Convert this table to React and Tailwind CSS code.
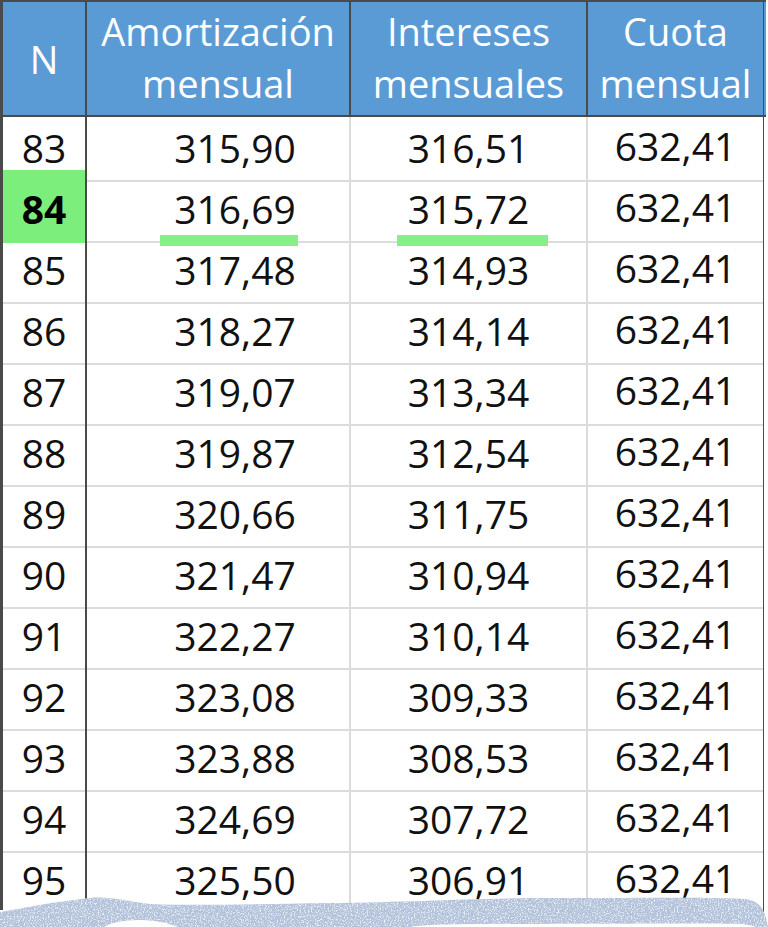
const ROWS = [
  ['83', '315,90', '316,51', '632,41'],
  ['84', '316,69', '315,72', '632,41'],
  ['85', '317,48', '314,93', '632,41'],
  ['86', '318,27', '314,14', '632,41'],
  ['87', '319,07', '313,34', '632,41'],
  ['88', '319,87', '312,54', '632,41'],
  ['89', '320,66', '311,75', '632,41'],
  ['90', '321,47', '310,94', '632,41'],
  ['91', '322,27', '310,14', '632,41'],
  ['92', '323,08', '309,33', '632,41'],
  ['93', '323,88', '308,53', '632,41'],
  ['94', '324,69', '307,72', '632,41'],
  ['95', '325,50', '306,91', '632,41'],
];

const font = { fontFamily: '"Open Sans", "Noto Sans", sans-serif' };

const EDGE =
  'M0 17 C20 14 45 8 90 3 C110 1 125 6 150 9 C200 11 260 9 330 8 C420 7 470 3 560 3 C650 3 720 2 745 4 C760 6 765 14 768 32 L0 32 Z';

function TornEdge() {
  return (
    <svg className="absolute left-0 bottom-0" width="768" height="32" viewBox="0 0 768 32">
      <defs>
        <filter id="speck" x="0" y="0" width="100%" height="100%">
          <feTurbulence type="fractalNoise" baseFrequency="0.7" numOctaves="3" seed="4" />
          <feColorMatrix type="matrix" values="0 0 0 0 1  0 0 0 0 1  0 0 0 0 1  0 0 0 4 -1.9" />
          <feComposite in2="SourceGraphic" operator="in" />
        </filter>
      </defs>
      <path d={EDGE} fill="#b2c2da" />
      <path d={EDGE} fill="#ffffff" filter="url(#speck)" opacity="0.75" />
      <path d="M104 32 C110 28 122 25 140 25 C158 25 170 29 178 32 Z" fill="#ffffff" />
      <path d="M410 32 C420 30 440 29 500 29 C610 29 700 28 742 29 C750 30 754 31 756 32 Z" fill="#ffffff" />
    </svg>
  );
}

export default function App() {
  return (
    <div className="relative w-[768px] h-[927px] overflow-hidden bg-white text-[#111]" style={font}>
      <div className="w-[766px] border-t-2 border-l-[3px] border-[#4a4a4a]">
        {/* Header */}
        <div className="grid grid-cols-[84px_264px_237px_176px] h-[115px] bg-[#5b9bd5] border-b-2 border-[#4a4a4a] text-white text-[38px] leading-[52px]">
          <div className="flex items-center justify-center border-r-2 border-[#4a4a4a]">N</div>
          <div className="flex flex-col items-center justify-center border-r-2 border-[#4a4a4a] pb-1">
            <span>Amortización</span>
            <span>mensual</span>
          </div>
          <div className="flex flex-col items-center justify-center border-r-2 border-[#4a4a4a] pb-1">
            <span>Intereses</span>
            <span>mensuales</span>
          </div>
          <div className="flex flex-col items-center justify-center border-r border-[#4a4a4a] pb-1">
            <span>Cuota</span>
            <span>mensual</span>
          </div>
        </div>

        {/* Body */}
        {ROWS.map((r, i) => {
          const hl = i === 1;
          return (
            <div key={r[0]} className="grid grid-cols-[84px_264px_237px_176px] h-[61px] text-[39px]">
              <div className={`relative flex items-center justify-center border-r-2 border-[#4a4a4a] border-b-2 ${hl ? 'bg-[#7cee7c] border-b-[#7cee7c] font-bold text-black' : 'border-b-[#dcdcdc]'}`}>
                {hl && <div className="absolute left-0 right-0 -top-2 h-2 bg-[#7cee7c]" />}
                <span className="relative">{r[0]}</span>
              </div>
              <div className="relative flex items-center justify-center pl-[34px] border-r-2 border-r-[#dcdcdc] border-b-2 border-b-[#dcdcdc]">
                {r[1]}
                {hl && <div className="absolute left-[73px] w-[138px] -bottom-[5px] h-[11px] bg-[#86ef86]" />}
              </div>
              <div className="relative flex items-center justify-center border-r-2 border-r-[#dcdcdc] border-b-2 border-b-[#dcdcdc]">
                {r[2]}
                {hl && <div className="absolute left-[46px] w-[151px] -bottom-[5px] h-[11px] bg-[#86ef86]" />}
              </div>
              <div className="flex items-center justify-center border-r border-r-[#4a4a4a] border-b-2 border-b-[#dcdcdc] pb-1">
                {r[3]}
              </div>
            </div>
          );
        })}
      </div>
      <TornEdge />
    </div>
  );
}
